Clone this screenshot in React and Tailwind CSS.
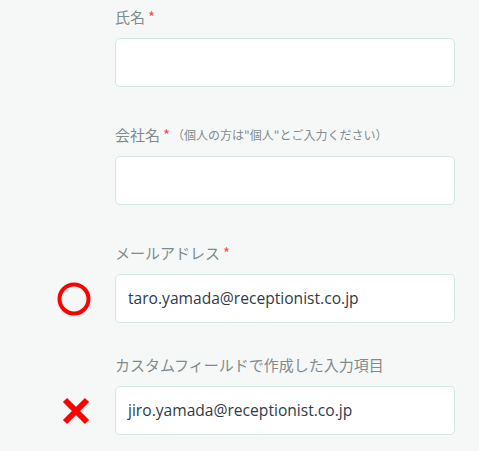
import React from "react";

const font = { fontFamily: '"Noto Sans", "Noto Sans CJK JP", sans-serif' };

function Circle() {
  return (
    <svg width="34" height="34" viewBox="0 0 34 34">
      <circle cx="17" cy="17" r="14.5" fill="none" stroke="#ff0000" strokeWidth="4" />
    </svg>
  );
}

function Cross() {
  return (
    <svg width="28" height="28" viewBox="0 0 28 28">
      <path d="M3 3 L25 25 M25 3 L3 25" stroke="#ff0000" strokeWidth="6" strokeLinecap="butt" />
    </svg>
  );
}

function Field({ label, required, note, value, mark, top }) {
  return (
    <div className={top}>
      <div className="pl-[115px] h-[22px] flex items-center text-[15px] leading-[22px] text-[#7f8c8d] font-['Noto_Sans_CJK_JP',sans-serif]">
        <span>{label}</span>
        {required && <span className="text-[#ff4b4b] ml-[3px]">*</span>}
        {note && <span className="text-[12px] ml-[2px]">{note}</span>}
      </div>
      <div className="flex items-center mt-[10px]">
        <div className="w-[115px] h-[49px] flex items-center">
          {mark === "o" && <div className="ml-[57px] flex"><Circle /></div>}
          {mark === "x" && <div className="ml-[62px] flex"><Cross /></div>}
        </div>
        <div className="w-[340px] h-[49px] bg-white border border-[#d3e8e6] rounded-[5px] flex items-center pl-3 text-[15.6px] text-[#2d3b4a] font-['Open_Sans',sans-serif]">
          {value}
        </div>
      </div>
    </div>
  );
}

export default function App() {
  return (
    <div className="w-[479px] h-[451px] bg-[#f6f8f8] overflow-hidden" style={font}>
      <Field label="氏名" required top="pt-[6px]" />
      <Field label="会社名" required note={'（個人の方は"個人"とご入力ください）'} top="mt-[37px]" />
      <Field label="メールアドレス" required value="taro.yamada@receptionist.co.jp" mark="o" top="mt-[37px]" />
      <Field label="カスタムフィールドで作成した入力項目" value="jiro.yamada@receptionist.co.jp" mark="x" top="mt-[31px]" />
    </div>
  );
}
